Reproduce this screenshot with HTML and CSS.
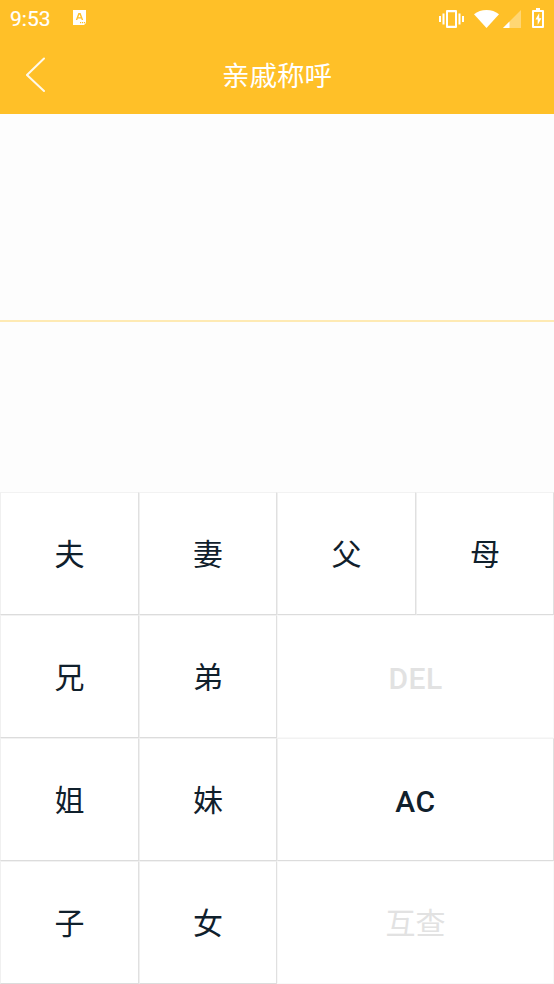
FILE: index.html
```html
<!DOCTYPE html>
<html lang="zh">
<head>
<meta charset="utf-8">
<title>亲戚称呼</title>
<link rel="stylesheet" href="styles.css">
</head>
<body>
<div class="app">
  <header class="top">
    <div class="status">
      <span class="time">9:53</span>
      <svg class="ic-a" width="15" height="16" viewBox="0 0 15 16"><path fill="#fff" d="M1 0h13v13l-2 2H1z"/><path fill="#ffc028" d="M6.400 3h2.200l2.600 7H9.700l-.5-1.500H5.800L5.300 10H3.800zM6.300 7.200h2.400L7.500 4.300zM8 12h1.200v1.200H8zM10 12h1.200v1.200H10zM12 12h1.200v1.200H12z"/></svg>
      <span class="spacer"></span>
      <svg class="ic-vib" width="25" height="18" viewBox="0 0 25 18"><path fill="#fff" fill-rule="evenodd" d="M8 0h9a1 1 0 0 1 1 1v16a1 1 0 0 1-1 1H8a1 1 0 0 1-1-1V1a1 1 0 0 1 1-1zm1 2.200v13.600h7V2.200zM3.500 3.500h2v11h-2zM19.500 3.500h2v11h-2zM0 6h2v6H0zM23 6h2v6h-2z"/></svg>
      <svg class="ic-wifi" width="25" height="18" viewBox="0 0 25 18"><path fill="#fff" d="M12.500 18 0 4.200C3.400 1.500 7.700 0 12.500 0S21.600 1.500 25 4.200z"/></svg>
      <svg class="ic-sig" width="18" height="18" viewBox="0 0 18 18"><path fill="#fff" fill-opacity=".35" d="M18 0v18H0z"/><path fill="#fff" d="M6.500 11.500V18H0z"/></svg>
      <svg class="ic-bat" width="12" height="20" viewBox="0 0 12 20"><path fill="#fff" fill-rule="evenodd" d="M4 0h4v2h3a1 1 0 0 1 1 1v16a1 1 0 0 1-1 1H1a1 1 0 0 1-1-1V3a1 1 0 0 1 1-1h3zM2 4v14h8V4z"/><path fill="#fff" d="M7.200 5 3.500 11.500h2.200V17l3.700-6.800H7.200z"/></svg>
    </div>
    <div class="nav">
      <svg class="back" width="20" height="38" viewBox="0 0 20 38"><path fill="none" stroke="#fff" stroke-width="2" stroke-linecap="round" stroke-opacity=".9" d="M18 2.500 1 19l17 16"/></svg>
      <h1 class="title">亲戚称呼</h1>
    </div>
  </header>
  <section class="display">
    <div class="pane input"></div>
    <div class="pane result"></div>
  </section>
  <section class="keys">
    <button class="key">夫</button>
    <button class="key">妻</button>
    <button class="key">父</button>
    <button class="key">母</button>
    <button class="key">兄</button>
    <button class="key">弟</button>
    <button class="key wide off latin">DEL</button>
    <button class="key">姐</button>
    <button class="key">妹</button>
    <button class="key wide latin">AC</button>
    <button class="key">子</button>
    <button class="key">女</button>
    <button class="key wide off">互查</button>
  </section>
</div>
</body>
</html>
```
FILE: styles.css
```css
* { box-sizing: border-box; }
html, body { margin: 0; padding: 0; }
body {
  width: 554px;
  height: 984px;
  overflow: hidden;
  background: #fff;
  font-family: Roboto, "Noto Sans CJK SC", sans-serif;
}
.app { display: flex; flex-direction: column; height: 984px; }

.top { height: 114px; background: #ffc028; color: #fff; flex: none; }
.status {
  height: 38px;
  display: flex;
  align-items: center;
  padding: 0 10px 0 10px;
}
.time { font-size: 21px; font-weight: 400; line-height: 38px; width: 62px; -webkit-text-stroke: .2px #fff; }
.ic-a { margin-top: -2px; }
.spacer { flex: 1; }
.ic-vib { margin-right: 10px; margin-top: -1px; }
.ic-wifi { margin-right: 4px; }
.ic-sig { margin-right: 11px; }
.ic-bat { margin-top: -3px; }

.nav { height: 76px; position: relative; display: flex; align-items: center; justify-content: center; }
.back { position: absolute; left: 26px; top: 18px; }
.title {
  margin: -5px 0 0;
  font-size: 27.5px;
  font-weight: 400;
  color: #fff;
  font-family: "Noto Sans CJK SC", sans-serif;
}

.display { height: 378px; flex: none; background: #fdfdfd; display: flex; flex-direction: column; }
.pane { flex: none; }
.input { height: 208px; border-bottom: 2px solid #feeab4; }
.result { flex: 1; }

.keys {
  flex: none;
  height: 492px;
  display: grid;
  grid-template-columns: 139px 138px 139px 138px;
  grid-template-rows: repeat(4, 123px);
}
.key {
  appearance: none;
  margin: 0;
  padding: 0 0 3px;
  background: #fff;
  border: 0;
  border-top: 1px solid #f2f2f2;
  border-left: 1px solid #f0f0f0;
  border-right: 1px solid #e0e0e0;
  border-bottom: 1px solid #dcdcdc;
  color: #10202c;
  font-family: "Noto Sans CJK SC", sans-serif;
  font-size: 30px;
  line-height: 1;
}
.wide { grid-column: span 2; }
.latin { font-family: Roboto, sans-serif; font-size: 30px; font-weight: 500; letter-spacing: .5px; padding: 4px 0 0; }
.off { color: #e2e2e2; border-color: #f8f8f8; }
```
